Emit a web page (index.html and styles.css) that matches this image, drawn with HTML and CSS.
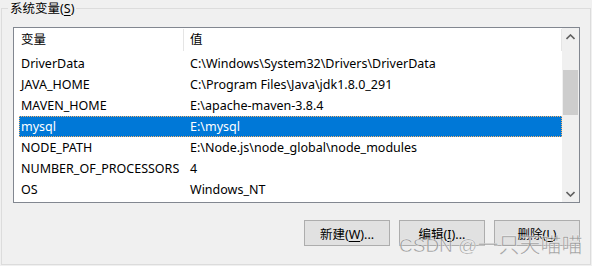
FILE: index.html
```html
<!DOCTYPE html>
<html lang="zh-CN">
<head>
  <meta charset="UTF-8" />
  <title>系统变量</title>
  <link rel="stylesheet" href="styles.css">
</head>
<body>

  <!-- System variables group -->
  <div class="group">
    <div class="group-title">系统变量(<u>S</u>)</div>

    <div class="listbox">
      <div class="list">
        <div class="head">
          <div class="hcell name">变量</div>
          <div class="hcell value">值</div>
        </div>
        <div class="row"><div class="cell name">DriverData</div><div class="cell value">C:\Windows\System32\Drivers\DriverData</div></div>
        <div class="row"><div class="cell name">JAVA_HOME</div><div class="cell value">C:\Program Files\Java\jdk1.8.0_291</div></div>
        <div class="row"><div class="cell name">MAVEN_HOME</div><div class="cell value">E:\apache-maven-3.8.4</div></div>
        <div class="row selected"><div class="cell name">mysql</div><div class="cell value">E:\mysql</div></div>
        <div class="row"><div class="cell name">NODE_PATH</div><div class="cell value">E:\Node.js\node_global\node_modules</div></div>
        <div class="row"><div class="cell name">NUMBER_OF_PROCESSORS</div><div class="cell value">4</div></div>
        <div class="row"><div class="cell name">OS</div><div class="cell value">Windows_NT</div></div>
      </div>

      <div class="scrollbar">
        <div class="arrow">
          <svg width="9" height="6" viewBox="0 0 9 6"><path d="M0.5 5 L4.5 1 L8.5 5" fill="none" stroke="#606060" stroke-width="1.6"/></svg>
        </div>
        <div class="track">
          <div class="thumb"></div>
        </div>
        <div class="arrow">
          <svg width="9" height="6" viewBox="0 0 9 6"><path d="M0.5 1 L4.5 5 L8.5 1" fill="none" stroke="#606060" stroke-width="1.6"/></svg>
        </div>
      </div>
    </div>

    <div class="buttons">
      <button class="btn">新建(<u>W</u>)...</button>
      <button class="btn">编辑(<u>I</u>)...</button>
      <button class="btn">删除(<u>L</u>)</button>
    </div>
  </div>

  <div class="watermark">CSDN @<span class="cjk">一只天喵喵</span></div>

</body>
</html>
```

FILE: styles.css
```css
* {
  margin: 0;
  padding: 0;
  box-sizing: border-box;
}
body {
  font-family: "Noto Sans", "Noto Sans CJK SC", sans-serif;
  font-size: 12.5px;
  background-color: #f0f0f0;
  color: #000000;
  width: 592px;
  height: 266px;
  overflow: hidden;
  position: relative;
}

/* Group box */
.group {
  margin: 8px 1px 0 1px;
  height: 257px;
  border: 1px solid #dcdcdc;
}
.group-title {
  display: inline-block;
  margin: -9px 0 0 6px;
  padding: 0 2px;
  height: 17px;
  line-height: 17px;
  background: #f0f0f0;
  vertical-align: top;
}
.group-title u {
  text-decoration-thickness: 1px;
  text-underline-offset: 2px;
}

/* List box */
.listbox {
  display: flex;
  margin: 1px 0 0 11px;
  width: 567px;
  height: 176px;
  border: 1px solid #828790;
  background: #ffffff;
}
.list {
  width: 548px;
  overflow: hidden;
}
.head {
  display: flex;
  height: 25px;
  align-items: stretch;
}
.hcell {
  padding-left: 7px;
  margin: 1px 0 2px;
  line-height: 22px;
  border-right: 1px solid #e5e5e5;
}
.hcell.name {
  width: 170px;
}
.hcell.value {
  flex: 1;
  padding-left: 6px;
}
.row {
  display: flex;
  height: 21px;
  line-height: 21px;
  margin-left: 5px;
  white-space: nowrap;
}
.cell.name {
  width: 165px;
  padding-left: 2px;
}
.cell.value {
  flex: 1;
  padding-left: 6px;
}
.row.selected {
  background: #0078d7;
  color: #ffffff;
  outline: 1px dotted #f6b26b;
  outline-offset: -1px;
}

/* Scrollbar */
.scrollbar {
  width: 17px;
  display: flex;
  flex-direction: column;
  background: #f0f0f0;
}
.arrow {
  height: 17px;
  display: flex;
  align-items: center;
  justify-content: center;
}
.track {
  flex: 1;
  padding-top: 25px;
}
.thumb {
  width: 15px;
  margin-left: 1px;
  height: 45px;
  background: #cdcdcd;
}

/* Buttons */
.buttons {
  display: flex;
  justify-content: flex-end;
  gap: 9px;
  margin: 17px 10px 0 0;
}
.btn {
  font-family: "Noto Sans", "Noto Sans CJK SC", sans-serif;
  font-size: 12.5px;
  width: 86px;
  height: 26px;
  background: #e1e1e1;
  border: 1px solid #adadad;
  color: #000000;
}
.btn u {
  text-underline-offset: 2px;
}

/* CSDN watermark over the corner */
.watermark {
  position: absolute;
  left: 399px;
  top: 232px;
  line-height: 22px;
  font-family: "Liberation Sans", "Noto Sans CJK SC", sans-serif;
  font-size: 19px;
  color: rgba(120, 120, 120, 0.7);
  -webkit-text-stroke: 0.5px rgba(255, 255, 255, 0.8);
  white-space: nowrap;
  pointer-events: none;
}
.watermark .cjk {
  font-family: "Noto Sans CJK SC", sans-serif;
  font-size: 21px;
}
```
